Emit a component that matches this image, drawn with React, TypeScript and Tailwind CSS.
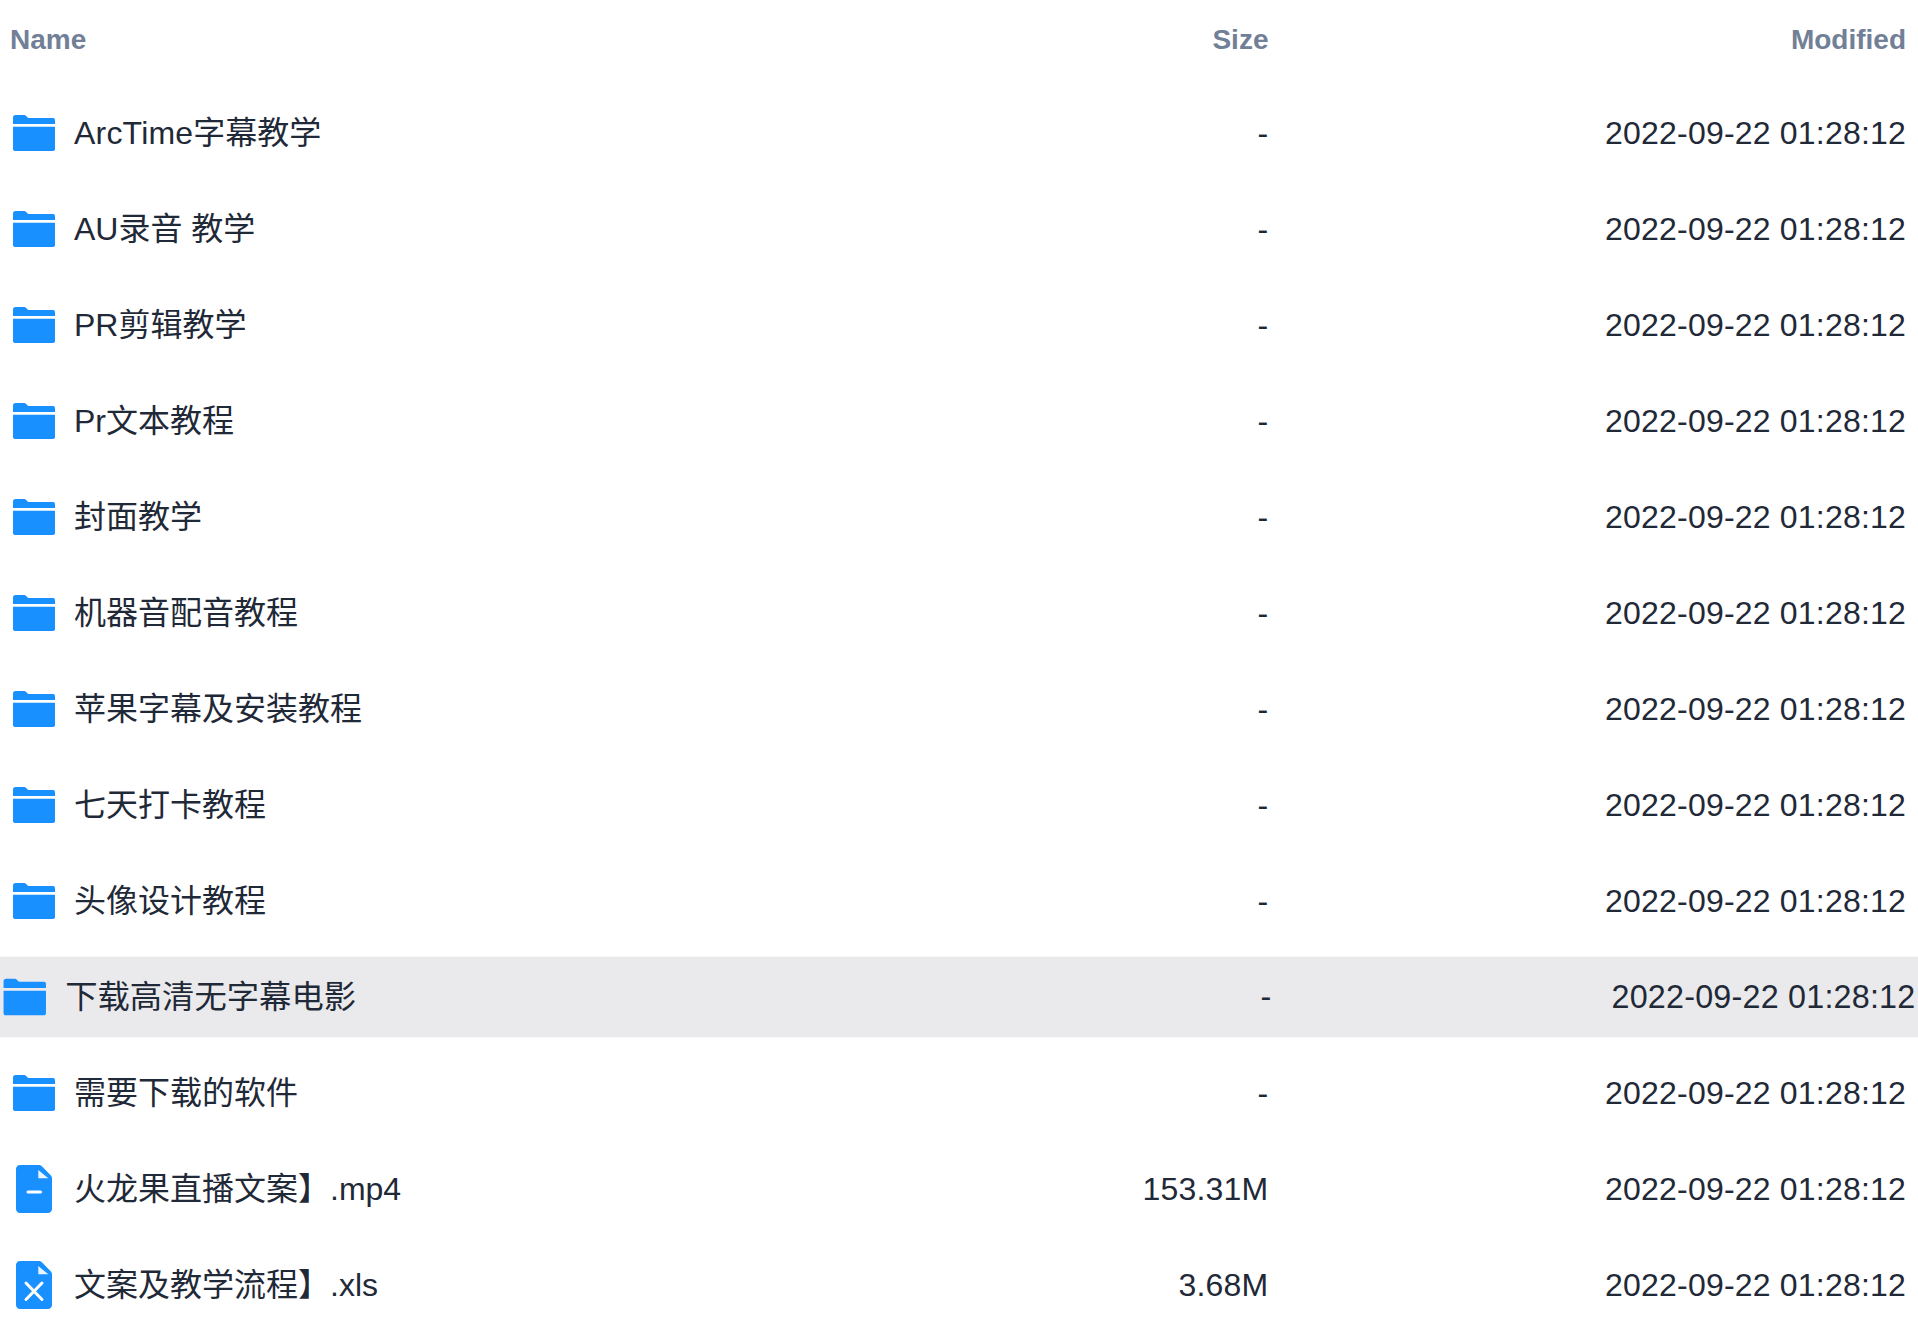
import React from 'react';

type Row = { prefix?: string; name: string; size: string; icon: 'folder' | 'video' | 'excel'; active?: boolean };

const modified = '2022-09-22 01:28:12';

const rows: Row[] = [
  { prefix: 'ArcTime', name: '字幕教学', size: '-', icon: 'folder' },
  { name: 'AU录音 教学', size: '-', icon: 'folder' },
  { name: 'PR剪辑教学', size: '-', icon: 'folder' },
  { name: 'Pr文本教程', size: '-', icon: 'folder' },
  { name: '封面教学', size: '-', icon: 'folder' },
  { name: '机器音配音教程', size: '-', icon: 'folder' },
  { name: '苹果字幕及安装教程', size: '-', icon: 'folder' },
  { name: '七天打卡教程', size: '-', icon: 'folder' },
  { name: '头像设计教程', size: '-', icon: 'folder' },
  { name: '下载高清无字幕电影', size: '-', icon: 'folder', active: true },
  { name: '需要下载的软件', size: '-', icon: 'folder' },
  { name: '火龙果直播文案】.mp4', size: '153.31M', icon: 'video' },
  { name: '文案及教学流程】.xls', size: '3.68M', icon: 'excel' },
];

function FileIcon({ type }: { type: Row['icon'] }) {
  if (type === 'folder') {
    return (
      <svg width="48" height="48" viewBox="0 0 48 48" className="shrink-0 overflow-visible">
        <path
          fill="#1890ff"
          d="M1 15V8.5C1 7 2 6 3.5 6h8c1.2 0 2.2.5 3 1.2L16.2 9H41c1.2 0 2 .8 2 2v4H1zM1 17.7h42V40c0 1.2-.8 2-2 2H3c-1.2 0-2-.8-2-2V17.7z"
        />
      </svg>
    );
  }
  return (
    <svg width="48" height="48" viewBox="0 0 48 48" className="shrink-0 overflow-visible">
      <path
        fill="#1890ff"
        d="M8 0h19c1 0 1.9.4 2.6 1.1l9.3 9.3c.7.7 1.1 1.6 1.1 2.6V44c0 2.2-1.8 4-4 4H8c-2.2 0-4-1.8-4-4V4c0-2.2 1.8-4 4-4z"
      />
      <path fill="#fff" opacity="0.9" d="M26.3 5v8.3h10z" />
      {type === 'video' ? (
        <path stroke="#fff" strokeWidth="3" strokeLinecap="round" d="M16 27h12.5" />
      ) : (
        <path stroke="#fff" strokeWidth="3" strokeLinecap="round" d="M14 22l16 16.5M30 22L14 38.5" />
      )}
    </svg>
  );
}

export default function App() {
  return (
    <div className="h-screen overflow-hidden bg-white font-['Liberation_Sans','Noto_Sans_CJK_SC',sans-serif] text-[32px] text-[#1f2937]">
      <div className="grid h-[77px] grid-cols-[50fr_16.34fr_33.66fr] items-center px-3 pt-0.5 text-[28px] font-bold text-[#718096]">
        <div className="-ml-0.5">Name</div>
        <div className="text-right">Size</div>
        <div className="text-right">Modified</div>
      </div>
      <div className="mt-4 flex flex-col gap-4">
        {rows.map((row) => (
          <div
            key={row.name}
            className={
              row.active
                ? 'grid h-20 scale-[1.01] grid-cols-[50fr_16.34fr_33.66fr] items-center bg-[#eaeaec] px-3'
                : 'grid h-20 grid-cols-[50fr_16.34fr_33.66fr] items-center px-3'
            }
          >
            <div className="flex items-center gap-[14px] whitespace-nowrap">
              <FileIcon type={row.icon} />
              <span>
                {row.prefix && <span className="tracking-[0.2px]">{row.prefix}</span>}
                {row.name}
              </span>
            </div>
            <div className="text-right tracking-[0.2px]">{row.size}</div>
            <div className="text-right tracking-[0.2px]">{modified}</div>
          </div>
        ))}
      </div>
    </div>
  );
}
